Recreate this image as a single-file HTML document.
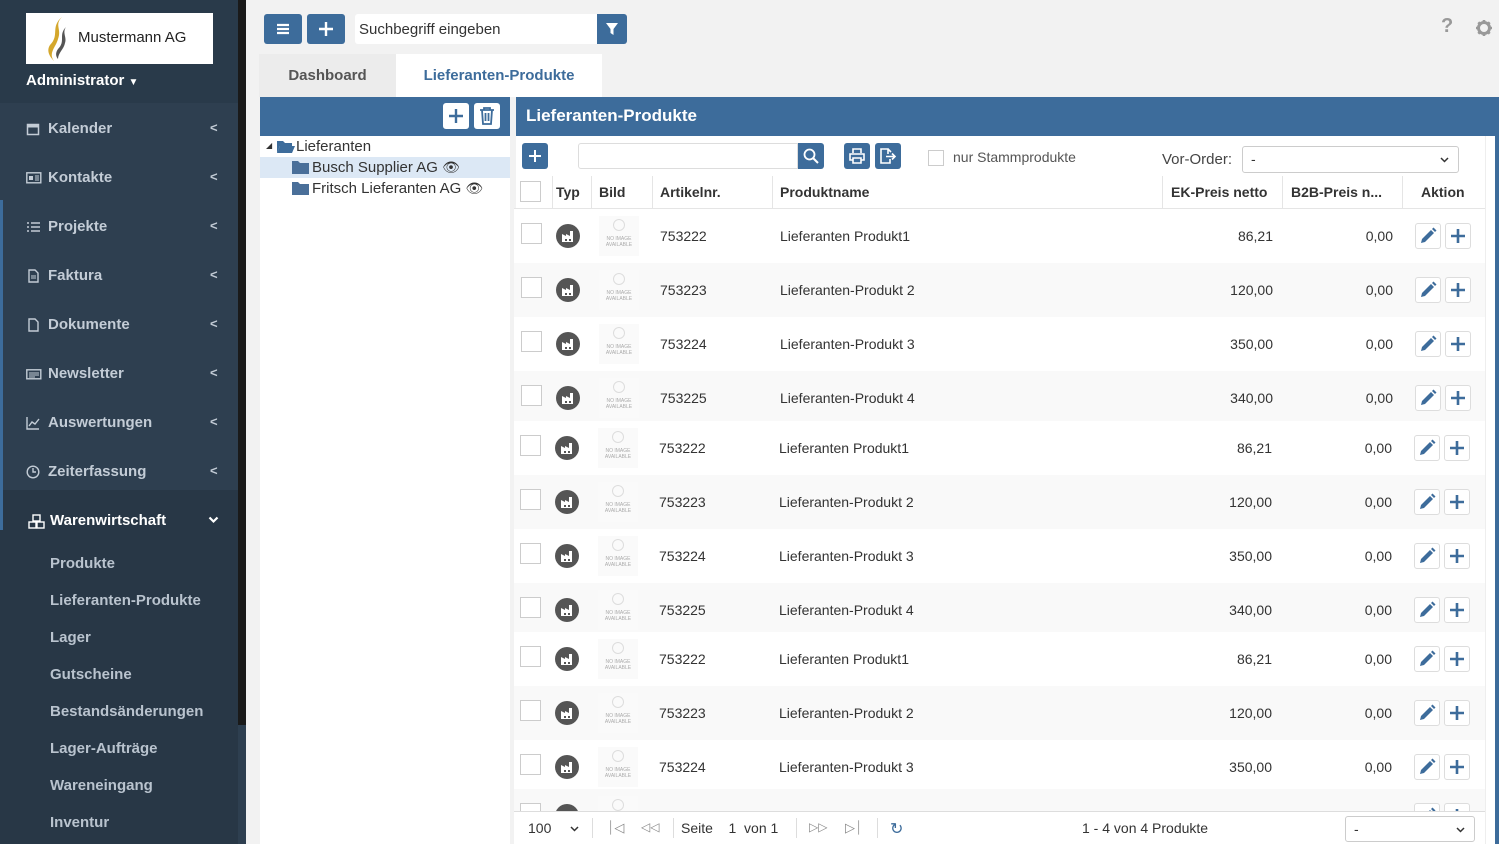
<!DOCTYPE html>
<html><head><meta charset="utf-8"><style>
*{box-sizing:border-box;margin:0;padding:0}
body{width:1499px;height:844px;overflow:hidden;background:#f2f2f2;font-family:"Liberation Sans","DejaVu Sans",sans-serif;font-size:14px;color:#333;position:relative}
.abs{position:absolute}
.sb{left:0;top:0;width:238px;height:844px;background:#2e3f50}
.sbhead{left:0;top:0;width:238px;height:103px;background:#293a4a}
.strip{left:238px;top:0;width:8px;height:725px;background:#1a1a1a}
.strip2{left:238px;top:725px;width:8px;height:119px;background:#2e3f50}
.nav{left:26px;color:#c3ccd6;font-size:15px;font-weight:bold}
.nav svg{position:absolute;left:0;top:2px}
.nav span{position:absolute;left:22px;top:0;white-space:nowrap}
.chev{left:210px;color:#c3ccd6;font-size:13px;font-weight:bold}
.sub{left:50px;color:#b9c3ce;font-size:15px;font-weight:bold}
.btn{background:#3d6c9b;border-radius:3px;color:#fff;text-align:center}
.wbtn{background:#fff;border:1px solid #ddd;border-radius:3px}
.cb{width:21px;height:21px;border:1px solid #ccc;background:#fff}
.row{left:514px;width:971px}
.cell{position:absolute;top:0;height:100%;display:flex;align-items:center;font-size:14px;color:#333}
.th{font-weight:bold;font-size:14px;color:#333}
.noimg{position:absolute;width:40px;height:40px;background:#fafafa;font-size:5px;color:#aaa;text-align:center;line-height:6px}
</style></head><body>
<div class="abs sb"></div>
<div class="abs sbhead"></div>
<div class="abs" style="left:0;top:490px;width:238px;height:354px;background:#283746"></div>
<div class="abs" style="left:0;top:200px;width:3px;height:330px;background:#3d6c9b"></div>
<div class="abs strip"></div><div class="abs strip2"></div>
<div class="abs" style="left:26px;top:13px;width:187px;height:51px;background:#fff"></div>
<svg class="abs" style="left:42px;top:15px" width="28" height="48" viewBox="0 0 28 48"><path d="M20 2C8 12 18 20 8 30C4 36 8 42 12 46C6 38 14 32 16 24C20 14 12 10 20 2Z" fill="#d4a72c"/><path d="M24 12C16 20 24 26 16 34C13 38 14 42 16 44C16 38 22 34 23 28C25 22 20 18 24 12Z" fill="#555"/></svg>
<div class="abs" style="left:78px;top:29px;font-size:15px;color:#222">Mustermann AG</div>
<div class="abs" style="left:26px;top:72px;color:#fff;font-weight:bold;font-size:15px">Administrator <span style="font-size:10px">▼</span></div>

<div class="abs nav" style="top:120px"><svg width="14" height="14" viewBox="0 0 14 14"><rect x="1.5" y="2.5" width="11" height="10" fill="none" stroke="#c3ccd6" stroke-width="1.5"/><rect x="1.5" y="2.5" width="11" height="3" fill="#c3ccd6"/></svg><span>Kalender</span></div>
<div class="abs nav" style="top:169px"><svg width="16" height="14" viewBox="0 0 16 14"><rect x="0.8" y="1.8" width="14" height="10" fill="none" stroke="#c3ccd6" stroke-width="1.4"/><rect x="3" y="5" width="4" height="4" fill="#c3ccd6"/><path d="M9 5h4M9 7h4M9 9h4" stroke="#c3ccd6"/></svg><span>Kontakte</span></div>
<div class="abs nav" style="top:218px"><svg width="14" height="14" viewBox="0 0 14 14"><path d="M1 3h2M5 3h9M1 7h2M5 7h9M1 11h2M5 11h9" stroke="#c3ccd6" stroke-width="1.6"/></svg><span>Projekte</span></div>
<div class="abs nav" style="top:267px"><svg width="14" height="14" viewBox="0 0 14 14"><path d="M3 1h6l3 3v9H3z" fill="none" stroke="#c3ccd6" stroke-width="1.4"/><path d="M5 7h5M5 9h5" stroke="#c3ccd6"/></svg><span>Faktura</span></div>
<div class="abs nav" style="top:316px"><svg width="14" height="14" viewBox="0 0 14 14"><path d="M3 1h6l3 3v9H3z" fill="none" stroke="#c3ccd6" stroke-width="1.4"/></svg><span>Dokumente</span></div>
<div class="abs nav" style="top:365px"><svg width="16" height="14" viewBox="0 0 16 14"><rect x="0.8" y="2.8" width="14" height="9" fill="none" stroke="#c3ccd6" stroke-width="1.4"/><path d="M3 6h10M3 8h10M3 10h6" stroke="#c3ccd6"/></svg><span>Newsletter</span></div>
<div class="abs nav" style="top:414px"><svg width="14" height="14" viewBox="0 0 14 14"><path d="M1 1v12h12" fill="none" stroke="#c3ccd6" stroke-width="1.4"/><path d="M3 10l3-4 3 2 4-5" fill="none" stroke="#c3ccd6" stroke-width="1.4"/></svg><span>Auswertungen</span></div>
<div class="abs nav" style="top:463px"><svg width="14" height="14" viewBox="0 0 14 14"><circle cx="7" cy="7" r="5.8" fill="none" stroke="#c3ccd6" stroke-width="1.4"/><path d="M7 3v4h3" fill="none" stroke="#c3ccd6" stroke-width="1.4"/></svg><span>Zeiterfassung</span></div>
<div class="abs chev" style="top:120px">&lt;</div><div class="abs chev" style="top:169px">&lt;</div><div class="abs chev" style="top:218px">&lt;</div><div class="abs chev" style="top:267px">&lt;</div><div class="abs chev" style="top:316px">&lt;</div><div class="abs chev" style="top:365px">&lt;</div><div class="abs chev" style="top:414px">&lt;</div><div class="abs chev" style="top:463px">&lt;</div>
<div class="abs nav" style="top:512px;left:28px;color:#fff"><svg width="18" height="16" viewBox="0 0 18 16"><rect x="5" y="1" width="7" height="6" fill="none" stroke="#fff" stroke-width="1.4"/><rect x="1" y="8" width="7" height="6" fill="none" stroke="#fff" stroke-width="1.4"/><rect x="9" y="8" width="7" height="6" fill="none" stroke="#fff" stroke-width="1.4"/></svg><span style="color:#fff">Warenwirtschaft</span></div>
<svg class="abs" style="left:208px;top:516px" width="11" height="8" viewBox="0 0 11 8"><path d="M1.5 1.5l4 4 4-4" fill="none" stroke="#fff" stroke-width="2.2"/></svg>
<div class="abs sub" style="top:555px">Produkte</div>
<div class="abs sub" style="top:592px">Lieferanten-Produkte</div>
<div class="abs sub" style="top:629px">Lager</div>
<div class="abs sub" style="top:666px">Gutscheine</div>
<div class="abs sub" style="top:703px">Bestandsänderungen</div>
<div class="abs sub" style="top:740px">Lager-Aufträge</div>
<div class="abs sub" style="top:777px">Wareneingang</div>
<div class="abs sub" style="top:814px">Inventur</div>

<!-- top bar -->
<div class="abs btn" style="left:264px;top:14px;width:38px;height:30px"><svg width="14" height="12" style="margin-top:9px" viewBox="0 0 14 12"><path d="M1 2h12M1 6h12M1 10h12" stroke="#fff" stroke-width="2.2"/></svg></div>
<div class="abs btn" style="left:307px;top:14px;width:38px;height:30px"><svg width="16" height="16" style="margin-top:7px" viewBox="0 0 16 16"><path d="M8 1v14M1 8h14" stroke="#fff" stroke-width="2.4"/></svg></div>
<div class="abs" style="left:355px;top:14px;width:243px;height:30px;background:#fff;border-radius:3px 0 0 3px;padding:7px 4px;font-size:15px;color:#333">Suchbegriff eingeben</div>
<div class="abs btn" style="left:597px;top:14px;width:30px;height:30px;border-radius:0 3px 3px 0"><svg width="14" height="14" style="margin-top:8px" viewBox="0 0 14 14"><path d="M1 1h12L8.5 7v6L5.5 11V7z" fill="#fff"/></svg></div>
<div class="abs" style="left:1441px;top:15px;font-size:20px;font-weight:bold;color:#999">?</div>
<svg class="abs" style="left:1476px;top:20px" width="16" height="16" viewBox="0 0 16 16"><circle cx="8" cy="8" r="5.5" fill="none" stroke="#999" stroke-width="3"/><path d="M8 0v4M8 12v4M0 8h4M12 8h4M2.3 2.3l2.8 2.8M10.9 10.9l2.8 2.8M2.3 13.7l2.8-2.8M10.9 5.1l2.8-2.8" stroke="#999" stroke-width="2.6"/></svg>

<!-- tabs -->
<div class="abs" style="left:259px;top:54px;width:137px;height:43px;background:#ececec;font-weight:bold;font-size:15px;color:#555;text-align:center;line-height:43px">Dashboard</div>
<div class="abs" style="left:396px;top:54px;width:206px;height:43px;background:#fff;font-weight:bold;font-size:15px;color:#3d6c9b;text-align:center;line-height:43px">Lieferanten-Produkte</div>

<!-- tree panel -->
<div class="abs" style="left:260px;top:97px;width:250px;height:747px;background:#fff"></div>
<div class="abs" style="left:260px;top:97px;width:250px;height:39px;background:#3d6c9b"></div>
<div class="abs" style="left:443px;top:103px;width:26px;height:26px;background:#fff;border-radius:3px"><svg width="16" height="16" style="margin:5px" viewBox="0 0 16 16"><path d="M8 1v14M1 8h14" stroke="#3d6c9b" stroke-width="2.4"/></svg></div>
<div class="abs" style="left:474px;top:103px;width:26px;height:26px;background:#fff;border-radius:3px"><svg width="16" height="18" style="margin:4px 5px" viewBox="0 0 16 18"><path d="M1 3h14M5 3V1h6v2M3 3l1 14h8l1-14M6.5 6v8M9.5 6v8" fill="none" stroke="#3d6c9b" stroke-width="1.8"/></svg></div>
<div class="abs" style="left:266px;top:141px;font-size:8px;color:#333">◢</div>
<svg class="abs" style="left:276px;top:140px" width="19" height="14" viewBox="0 0 19 14"><path d="M1 1h6l2 2h7v3H4L1 13z" fill="#3d6c9b"/><path d="M4 6h15l-3 7H1z" fill="#3d6c9b"/></svg>
<div class="abs" style="left:296px;top:138px;font-size:15px">Lieferanten</div>
<div class="abs" style="left:260px;top:157px;width:250px;height:21px;background:#dce8f5"></div>
<svg class="abs" style="left:292px;top:161px" width="17" height="13" viewBox="0 0 17 13"><path d="M0 0h6l2 2h9v11H0z" fill="#4a6f99"/></svg>
<div class="abs" style="left:312px;top:159px;font-size:15px">Busch Supplier AG <span style="font-size:14px">👁</span></div>
<svg class="abs" style="left:292px;top:182px" width="17" height="13" viewBox="0 0 17 13"><path d="M0 0h6l2 2h9v11H0z" fill="#4a6f99"/></svg>
<div class="abs" style="left:312px;top:180px;font-size:15px">Fritsch Lieferanten AG <span style="font-size:14px">👁</span></div>

<!-- main panel -->
<div class="abs" style="left:516px;top:97px;width:983px;height:747px;background:#fff"></div>
<div class="abs" style="left:516px;top:97px;width:983px;height:39px;background:#3d6c9b;color:#fff;font-weight:bold;font-size:17px;padding:9px 10px">Lieferanten-Produkte</div>
<div class="abs" style="left:1485px;top:136px;width:14px;height:708px;background:#fff;border-left:1px solid #eee"></div>
<div class="abs" style="left:1495px;top:136px;width:4px;height:708px;background:#3d6c9b"></div>
<div class="abs btn" style="left:522px;top:143px;width:26px;height:26px"><svg width="14" height="14" style="margin-top:6px" viewBox="0 0 14 14"><path d="M7 1v12M1 7h12" stroke="#fff" stroke-width="2"/></svg></div>
<div class="abs" style="left:578px;top:143px;width:220px;height:26px;border:1px solid #ddd;border-radius:3px 0 0 3px"></div>
<div class="abs btn" style="left:798px;top:143px;width:26px;height:26px;border-radius:0 3px 3px 0"><svg width="16" height="16" style="margin-top:5px" viewBox="0 0 16 16"><circle cx="6.5" cy="6.5" r="5" fill="none" stroke="#fff" stroke-width="1.8"/><path d="M10 10l5 5" stroke="#fff" stroke-width="2"/></svg></div>
<div class="abs btn" style="left:844px;top:143px;width:26px;height:26px"><svg width="16" height="16" style="margin-top:5px" viewBox="0 0 16 16"><path d="M4 5V1h8v4M4 12H1V6h14v6h-3M4 10h8v5H4z" fill="none" stroke="#fff" stroke-width="1.6"/></svg></div>
<div class="abs btn" style="left:875px;top:143px;width:26px;height:26px"><svg width="18" height="16" style="margin-top:5px" viewBox="0 0 18 16"><path d="M9 6V1H2v14h9v-4M9 1l3 3" fill="none" stroke="#fff" stroke-width="1.6"/><path d="M7 8.5h9M13 5.5l3 3-3 3" fill="none" stroke="#fff" stroke-width="1.6"/></svg></div>
<div class="abs cb" style="left:928px;top:150px;width:16px;height:16px"></div>
<div class="abs" style="left:953px;top:149px;font-size:14px;color:#555">nur Stammprodukte</div>
<div class="abs" style="left:1162px;top:151px;font-size:15px;color:#444">Vor-Order:</div>
<div class="abs" style="left:1242px;top:146px;width:217px;height:27px;border:1px solid #ccc;border-radius:3px;padding:4px 8px;font-size:14px">-<svg style="position:absolute;right:9px;top:10px" width="9" height="6" viewBox="0 0 9 6"><path d="M1 1l3.5 3.5L8 1" fill="none" stroke="#333" stroke-width="1.5"/></svg></div>

<!-- header -->
<div class="abs row" style="top:176px;height:33px;border-bottom:1px solid #e5e5e5">
<div class="abs cb" style="left:6px;top:5px"></div>
<div class="abs" style="left:38px;top:0;height:33px;border-left:1px solid #e5e5e5"></div>
<div class="cell th" style="left:42px">Typ</div>
<div class="abs" style="left:77px;top:0;height:33px;border-left:1px solid #e5e5e5"></div>
<div class="cell th" style="left:85px">Bild</div>
<div class="abs" style="left:138px;top:0;height:33px;border-left:1px solid #e5e5e5"></div>
<div class="cell th" style="left:146px">Artikelnr.</div>
<div class="abs" style="left:258px;top:0;height:33px;border-left:1px solid #e5e5e5"></div>
<div class="cell th" style="left:266px">Produktname</div>
<div class="abs" style="left:648px;top:0;height:33px;border-left:1px solid #e5e5e5"></div>
<div class="cell th" style="left:657px">EK-Preis netto</div>
<div class="abs" style="left:768px;top:0;height:33px;border-left:1px solid #e5e5e5"></div>
<div class="cell th" style="left:777px">B2B-Preis n...</div>
<div class="abs" style="left:888px;top:0;height:33px;border-left:1px solid #e5e5e5"></div>
<div class="cell th" style="left:907px">Aktion</div>
</div>

<div id="rows"></div>
<script>
(function(){
var d=[["753222","Lieferanten Produkt1","86,21"],["753223","Lieferanten-Produkt 2","120,00"],["753224","Lieferanten-Produkt 3","350,00"],["753225","Lieferanten-Produkt 4","340,00"]];
var c=[236,290,344,398,448,502,556,610,659,713,767,816];var h="";
for(var i=0;i<12;i++){var r=d[i%4];var tp=c[i]-27;var o=(i>=4)?-1:0;
h+='<div class="abs row" style="top:'+tp+'px;height:54px;background:'+(i%2?'#f9f9f9':'#fff')+'">'+
'<div class="abs cb" style="left:'+(7+o)+'px;top:14px"></div>'+
'<svg class="abs" style="left:'+(42+o)+'px;top:15px" width="24" height="24" viewBox="0 0 24 24"><circle cx="12" cy="12" r="12" fill="#555"/><path d="M6 18V10l4 2V10l4 2V7h3v11z" fill="#fff"/><rect x="9" y="15" width="2" height="2" fill="#555"/><rect x="13" y="15" width="2" height="2" fill="#555"/></svg>'+
'<div class="noimg" style="left:'+(85+o)+'px;top:7px"><div style="width:12px;height:12px;border-radius:50%;border:1px solid #ddd;margin:3px auto 5px"></div>NO IMAGE<br>AVAILABLE</div>'+
'<div class="cell" style="left:'+(146+o)+'px">'+r[0]+'</div>'+
'<div class="cell" style="left:'+(266+o)+'px">'+r[1]+'</div>'+
'<div class="cell" style="left:'+(648+o)+'px;width:111px;justify-content:flex-end">'+r[2]+'</div>'+
'<div class="cell" style="left:'+(768+o)+'px;width:111px;justify-content:flex-end">0,00</div>'+
'<div class="abs wbtn" style="left:'+(901+o)+'px;top:14px;width:26px;height:26px"><svg width="18" height="18" style="margin:3px" viewBox="0 0 18 18"><path d="M2 16l1-4 9-9 3 3-9 9z" fill="#3d6c9b"/><path d="M13 2l1.5-1.5 3 3L16 5z" fill="#3d6c9b"/></svg></div>'+
'<div class="abs wbtn" style="left:'+(931+o)+'px;top:14px;width:26px;height:26px"><svg width="16" height="16" style="margin:4px" viewBox="0 0 16 16"><path d="M8 1v14M1 8h14" stroke="#3d6c9b" stroke-width="2.6"/></svg></div></div>';}
document.getElementById("rows").innerHTML=h;
})();
</script>

<!-- footer -->
<div class="abs" style="left:514px;top:811px;width:971px;height:33px;background:#fff;border-top:1px solid #ddd"></div>
<div class="abs" style="left:528px;top:820px;font-size:14px">100</div>
<svg class="abs" style="left:570px;top:826px" width="9" height="6" viewBox="0 0 9 6"><path d="M1 1l3.5 3.5L8 1" fill="none" stroke="#333" stroke-width="1.5"/></svg>
<div class="abs" style="left:592px;top:818px;height:20px;border-left:1px solid #ddd"></div>
<div class="abs" style="left:607px;top:820px;font-size:13px;color:#888">⏐◁</div>
<div class="abs" style="left:641px;top:820px;font-size:12px;color:#888">◁◁</div>
<div class="abs" style="left:673px;top:818px;height:20px;border-left:1px solid #ddd"></div>
<div class="abs" style="left:681px;top:820px;font-size:14px">Seite &nbsp;&nbsp; 1 &nbsp;von 1</div>
<div class="abs" style="left:796px;top:818px;height:20px;border-left:1px solid #ddd"></div>
<div class="abs" style="left:809px;top:820px;font-size:12px;color:#888">▷▷</div>
<div class="abs" style="left:845px;top:820px;font-size:13px;color:#888">▷⏐</div>
<div class="abs" style="left:877px;top:818px;height:20px;border-left:1px solid #ddd"></div>
<div class="abs" style="left:890px;top:819px;font-size:16px;color:#3d6c9b">↻</div>
<div class="abs" style="left:1082px;top:820px;font-size:14px">1 - 4 von 4 Produkte</div>
<div class="abs" style="left:1345px;top:816px;width:130px;height:26px;border:1px solid #ccc;border-radius:3px;padding:4px 8px;font-size:14px;background:#fff">-<svg style="position:absolute;right:9px;top:10px" width="9" height="6" viewBox="0 0 9 6"><path d="M1 1l3.5 3.5L8 1" fill="none" stroke="#333" stroke-width="1.5"/></svg></div>
</body></html>
